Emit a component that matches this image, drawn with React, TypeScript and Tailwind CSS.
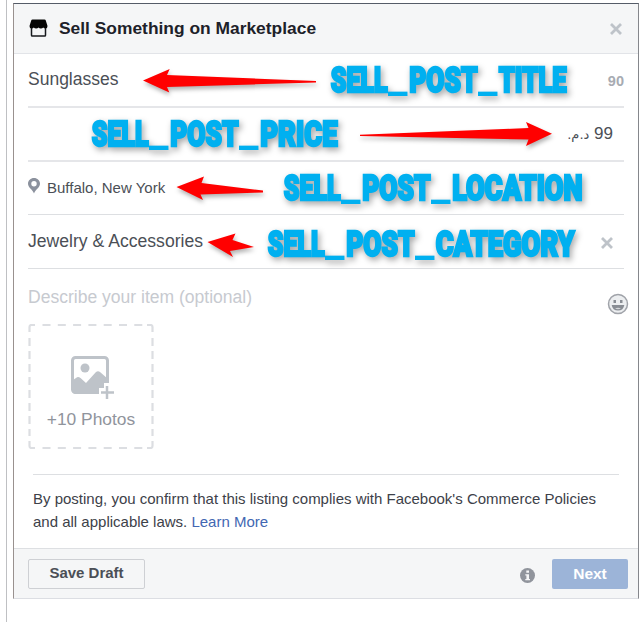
import React from "react";

type Word = { text: string; x: number; w: number };
type Label = { top: number; words: Word[] };

const labels: Label[] = [
  { top: 66, words: [{ text: "SELL", x: 330, w: 58 }, { text: "_", x: 388, w: 19 }, { text: "POST", x: 408.5, w: 69.5 }, { text: "_", x: 478, w: 19 }, { text: "TITLE", x: 498, w: 69 }] },
  { top: 120, words: [{ text: "SELL", x: 91, w: 58 }, { text: "_", x: 149, w: 19 }, { text: "POST", x: 169.5, w: 69.5 }, { text: "_", x: 239, w: 19 }, { text: "PRICE", x: 259.5, w: 78.5 }] },
  { top: 174, words: [{ text: "SELL", x: 283, w: 58 }, { text: "_", x: 341, w: 19 }, { text: "POST", x: 361.5, w: 69.5 }, { text: "_", x: 431, w: 19 }, { text: "LOCATION", x: 451.5, w: 131.5 }] },
  { top: 230, words: [{ text: "SELL", x: 267, w: 58 }, { text: "_", x: 325, w: 19 }, { text: "POST", x: 345.5, w: 69.5 }, { text: "_", x: 415, w: 19 }, { text: "CATEGORY", x: 435, w: 140 }] },
];

const arrows = [
  "143,80.5 169.7,69 167,75 316,81 316,82.5 167,87 169.3,92.5",
  "552,133.7 526,122 528.5,128 360,134.7 360,136 528.5,139.5 526,146",
  "176.5,187 204,176.5 201.5,183 263,190.5 263,192.5 200.5,194.5 203,200",
  "207.5,242 235.5,233.5 232.5,240 254,247 230,251 233,257",
];

function Annotations() {
  return (
    <svg className="pointer-events-none absolute inset-0" width="642" height="622" viewBox="0 0 642 622">
      <g fill="#ff0000" className="drop-shadow-[1px_3px_2px_rgba(0,0,0,0.3)]">
        {arrows.map((points) => (
          <polygon key={points} points={points} />
        ))}
      </g>
      <g
        fill="#00b0f0"
        stroke="#00b0f0"
        className="font-['Roboto',sans-serif] text-[35px] font-black drop-shadow-[2px_3px_3px_rgba(0,0,0,0.35)]"
      >
        {labels.map((label) => (
          <text key={label.top} y={label.top + 25.9}>
            {label.words.map((word) => (
              <tspan
                key={word.x}
                x={word.text === "_" ? word.x : word.x + 0.7}
                textLength={word.text === "_" ? word.w + 0.5 : word.w - 1}
                lengthAdjust="spacingAndGlyphs"
                strokeWidth={word.text === "_" ? 0 : 2.5}
              >
                {word.text}
              </tspan>
            ))}
          </text>
        ))}
      </g>
    </svg>
  );
}

function Cross({ className }: { className: string }) {
  return (
    <svg className={className} width="12" height="12" viewBox="0 0 12 12" stroke="#bec3c9" strokeWidth="2.8">
      <path d="M1 1L11 11M11 1L1 11" />
    </svg>
  );
}

function StoreIcon() {
  return (
    <svg width="20" height="19" viewBox="0 0 20 19">
      <path d="M3.5 .5h12Q16.500 .5 16.800 1.500L18.500 7Q18.500 9.500 16.500 9.500Q15 9.500 14.200 8.500Q13.400 9.500 11.900 9.500Q10.300 9.500 9.500 8.500Q8.700 9.500 7.100 9.500Q5.600 9.500 4.800 8.500Q4 9.500 2.500 9.500Q.5 9.500 .5 7L2.200 1.500Q2.500 .5 3.500 .5Z" fill="#050505" />
      <path d="M2.500 9V16.200Q2.500 17 3.300 17H15.700Q16.500 17 16.500 16.200V9" fill="none" stroke="#17191d" strokeWidth="1.5" />
    </svg>
  );
}

function PhotoIcon() {
  return (
    <svg width="44" height="43" viewBox="0 0 44 43">
      <rect x="1.500" y="1.500" width="35" height="35" rx="3" fill="#fff" stroke="#bec3c9" strokeWidth="3" />
      <circle cx="14" cy="12" r="4.500" fill="#bec3c9" />
      <path d="M2 24L5 22Q7 20 9.500 22L15 27L25 16Q27 14.500 29 16L37 23V27H33V32H28V38H5Q2 38 2 35Z" fill="#bec3c9" />
      <path d="M28 38V32H33V27H39V38Z" fill="#fff" />
      <path d="M36 30V43M30 36.500H43" stroke="#bec3c9" strokeWidth="2.500" />
    </svg>
  );
}

function SmileIcon() {
  return (
    <svg width="22" height="22" viewBox="0 0 22 22">
      <circle cx="11" cy="11" r="9.500" fill="#eceef0" stroke="#a0a3a9" strokeWidth="1.500" />
      <rect x="6.500" y="7" width="2.500" height="3" fill="#898d94" />
      <rect x="13" y="7" width="2.500" height="3" fill="#898d94" />
      <path d="M4.700 12H17.300Q16.500 17.500 11 17.500T4.700 12Z" fill="#898d94" />
      <path d="M8 15.500Q11 14 14 15.500Q11 17 8 15.500Z" fill="#d5d7da" />
    </svg>
  );
}

export default function App() {
  return (
    <div className="relative h-[622px] w-[642px] overflow-hidden bg-white pl-[6px] font-['Liberation_Sans',Arial,sans-serif]">
      <div className="h-full border-l border-[#bfc0c3] pl-[6px] pt-[3px]">
        <div className="flex h-[596px] w-[626px] flex-col border border-t-[#555c68] border-b-[#dcdee3] border-l-[#99918f] border-r-[#85878c] bg-white">
          <header className="flex h-[50px] shrink-0 items-center border-b border-[#e2e4e8] bg-[#f5f6f7] pl-[15px] pr-[16px]">
            <StoreIcon />
            <h1 className="ml-[10px] whitespace-nowrap text-[17.4px] font-bold text-[#1d2129]">Sell Something on Marketplace</h1>
            <Cross className="ml-auto" />
          </header>

          <main className="flex h-[494px] shrink-0 flex-col px-[14px]">
            <div className="flex h-[54px] items-center justify-between border-b-2 border-[#e5e6e9] pb-[1px]">
              <span className="text-[17.5px] text-[#4b4f56]">Sunglasses</span>
              <span className="pt-[4px] text-[14.500px] font-bold text-[#a7abb2]">90</span>
            </div>
            <div className="flex h-[54px] items-center justify-end border-b-2 border-[#e5e6e9] pr-[11px]">
              <span dir="rtl" className="text-[17px] text-[#4b4f56]">99 <span className="font-['DejaVu_Sans',sans-serif] text-[13px]">د.م.</span></span>
            </div>
            <div className="flex h-[53px] items-center border-b border-[#dddfe2]">
              <svg width="12" height="16" viewBox="0 0 12 16" className="-mt-[4px]">
                <path fillRule="evenodd" d="M6 0C2.600 0 0 2.500 0 5.800C0 9.500 4.500 11.500 6 15.500C7.500 11.500 12 9.500 12 5.800C12 2.500 9.400 0 6 0ZM6 3A2.700 2.700 0 1 1 6 8.400A2.700 2.700 0 0 1 6 3Z" fill="#8b919d" />
              </svg>
              <span className="ml-[7px] text-[15px] text-[#4b4f56]">Buffalo, New York</span>
            </div>
            <div className="flex h-[54px] items-center justify-between border-b border-[#dddfe2] pr-[11px]">
              <span className="text-[17.600px] text-[#4b4f56]">Jewelry &amp; Accessories</span>
              <Cross className="mt-[3px]" />
            </div>
            <div className="mt-[18px] flex h-[37px] justify-between">
              <span className="text-[17.550px] leading-[20px] text-[#c7cad0]">Describe your item (optional)</span>
              <div className="-mr-[5px] mt-[6px]"><SmileIcon /></div>
            </div>
            <div className="relative flex h-[125px] w-[126px] shrink-0 flex-col items-center pt-[32px]">
              <svg className="absolute inset-0" width="126" height="125" viewBox="0 0 126 125">
                <path d="M1.500 8V3Q1.500 1 3.500 1H7M119 1H122.500Q124.500 1 124.500 3V8M124.500 117V122Q124.500 124 122.500 124H119M7 124H3.500Q1.500 124 1.500 122V117" fill="none" stroke="#dcdee2" strokeWidth="2.200" />
                <path d="M14.500 1H116M14.500 124H116" stroke="#dcdee2" strokeWidth="2.200" strokeDasharray="8 7.300" />
                <path d="M1.500 14V112M124.500 14V112" stroke="#dcdee2" strokeWidth="2.200" strokeDasharray="8 5" />
              </svg>
              <div className="ml-[3px]"><PhotoIcon /></div>
              <span className="mt-[8px] whitespace-nowrap text-[17.400px] leading-[24px] text-[#90949c]">+10 Photos</span>
            </div>
            <div className="ml-[5px] mr-[5px] mt-[25px] border-t border-[#dddfe2] pt-[13px] text-[15px] leading-[22.500px] text-[#3d4149]">
              <p className="whitespace-nowrap">By posting, you confirm that this listing complies with Facebook's Commerce Policies</p>
              <p>and all applicable laws. <a className="text-[#4267b2]">Learn More</a></p>
            </div>
          </main>

          <footer className="flex min-h-0 grow items-center border-t border-[#dddfe2] bg-[#f5f6f7] pl-[14px] pr-[10px]">
            <button className="h-[30px] w-[117px] rounded-[2px] border border-[#ced0d4] text-[15px] font-bold text-[#4b4f56]">Save Draft</button>
            <svg className="ml-auto mt-[3px]" width="15" height="15" viewBox="0 0 15 15">
              <circle cx="7.500" cy="7.500" r="7.500" fill="#90949c" />
              <path d="M6.300 2.500H9V4.800H6.300ZM5.300 6.200H9V11H10V12.300H5.300V11H6.400V7.500H5.300Z" fill="#f5f6f7" />
            </svg>
            <button className="ml-[17px] h-[30px] w-[76px] rounded-[2px] bg-[#9cb4d8] text-[15.500px] font-bold text-white">Next</button>
          </footer>
        </div>
      </div>
      <Annotations />
    </div>
  );
}
